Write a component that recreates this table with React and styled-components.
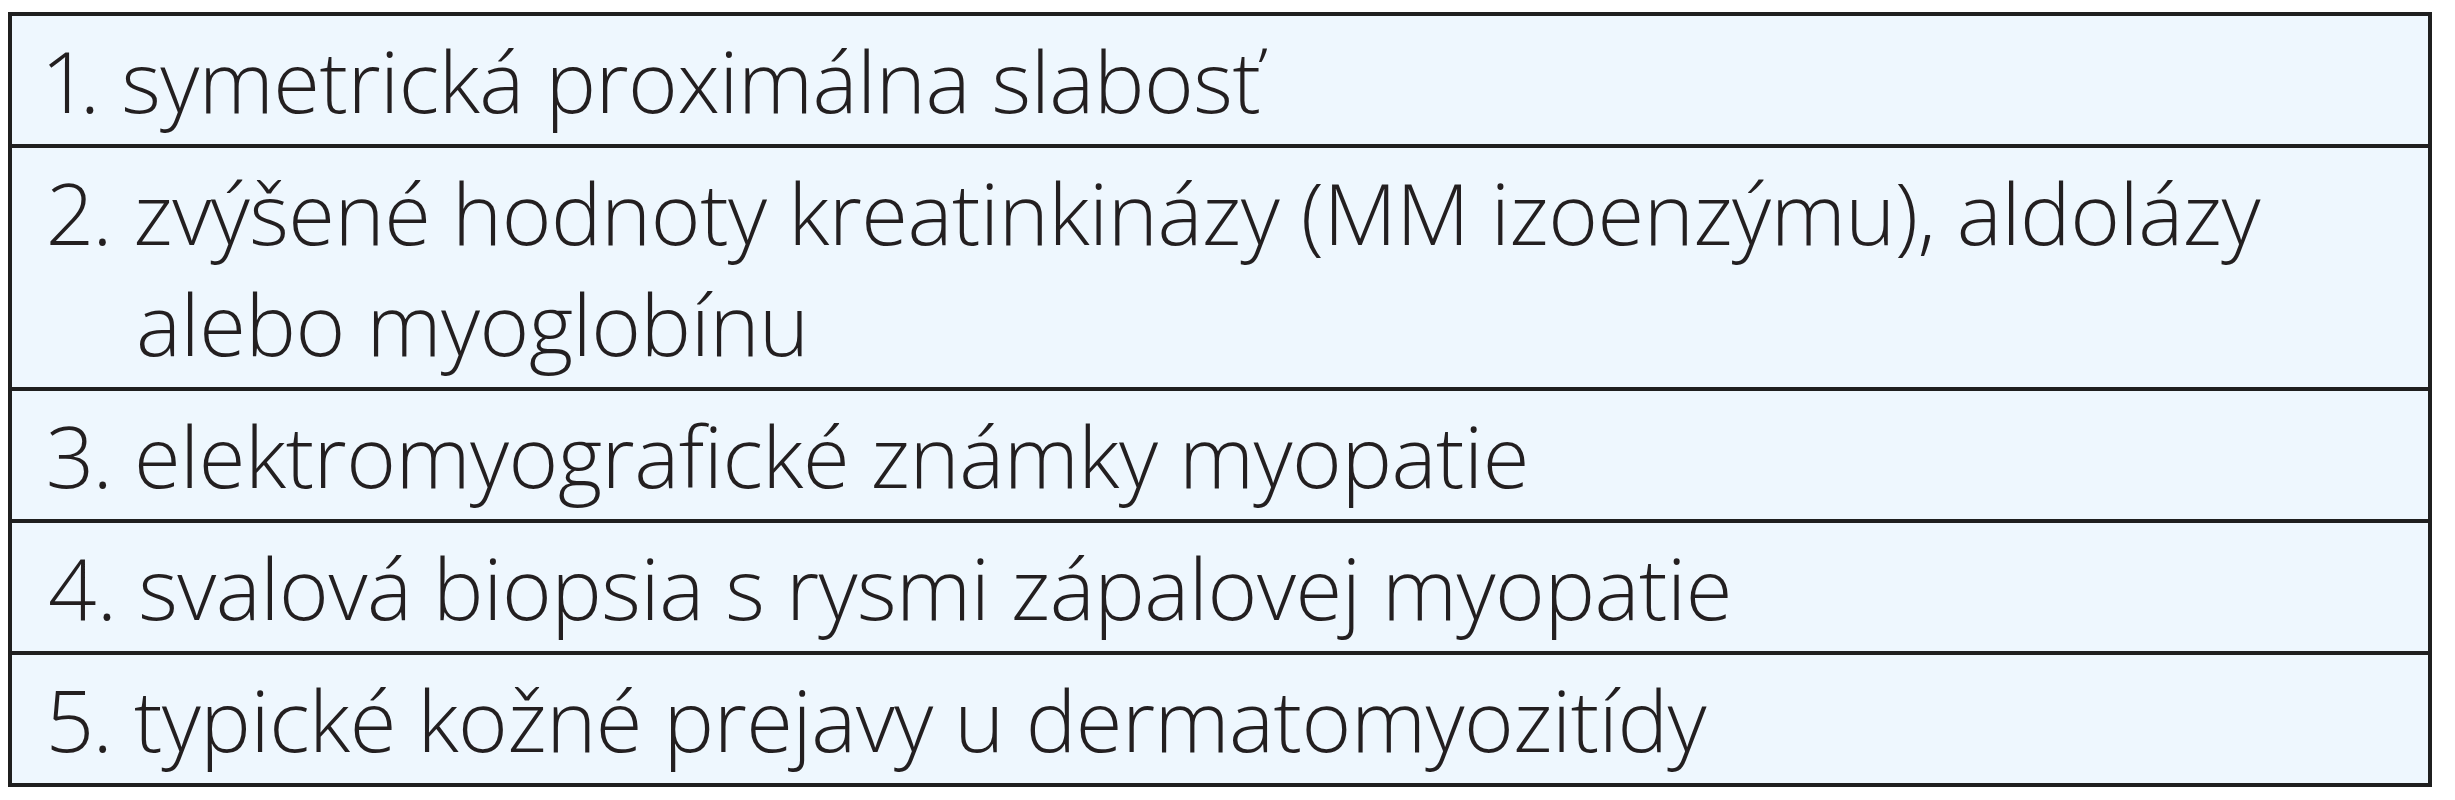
import React from "react";
import styled, { createGlobalStyle } from "styled-components";

const Global = createGlobalStyle`
  body {
    margin: 0;
    background: #ffffff;
  }
`;

const criteria = [
  "symetrická proximálna slabosť",
  "zvýšené hodnoty kreatinkinázy (MM izoenzýmu), aldolázy alebo myoglobínu",
  "elektromyografické známky myopatie",
  "svalová biopsia s rysmi zápalovej myopatie",
  "typické kožné prejavy u dermatomyozitídy",
];

const Page = styled.div`
  padding: 12px 0 0 8px;
`;

const Table = styled.div`
  width: 2424px;
  box-sizing: border-box;
  border: 4px solid #1f1f1f;
  background: #eef7fe;
  display: flex;
  flex-direction: column;
`;

const Row = styled.div`
  box-sizing: border-box;
  padding: 9px 60px 8px 124px;
  text-indent: -89px;
  font-family: "Open Sans", "Noto Sans", sans-serif;
  font-weight: 300;
  font-stretch: 95.5%;
  font-variant-numeric: proportional-nums;
  font-size: 85px;
  line-height: 111px;
  letter-spacing: -0.5px;
  color: #231f20;
  & + & {
    border-top: 4px solid #1f1f1f;
  }
`;

export default function App() {
  return (
    <>
      <Global />
      <Page>
        <Table>
          {criteria.map((text, i) => (
            <Row key={i}>
              {i + 1}. {text}
            </Row>
          ))}
        </Table>
      </Page>
    </>
  );
}
